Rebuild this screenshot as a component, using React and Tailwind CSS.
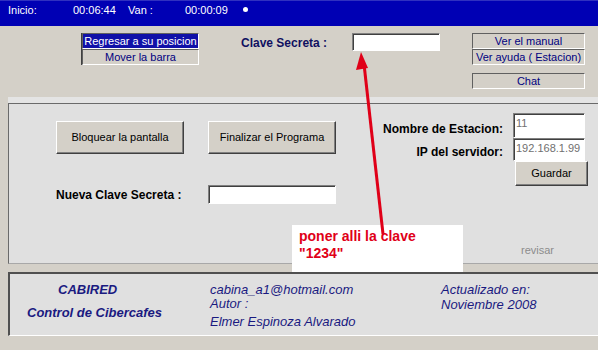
const sunken =
  'border border-t-[#808080] border-l-[#808080] border-b-white border-r-white shadow-[inset_1px_1px_0_#404040]';
const raised =
  'border border-t-white border-l-white border-b-[#404040] border-r-[#404040] shadow-[inset_-1px_-1px_0_#808080] bg-[#d4d0c8]';

function Field({ className = '', value = '', muted = false }) {
  return (
    <div className={`${sunken} bg-white flex items-start px-[2px] pt-[1px] text-[11px] ${muted ? 'bg-[#e4e4e4] text-[#707070]' : 'text-black'} ${className}`}>
      {value}
    </div>
  );
}

function FlatBtn({ children, className = '' }) {
  return (
    <div className={`border border-t-[#606060] border-l-[#606060] border-b-white border-r-white flex items-center justify-center text-[11px] text-[#000080] h-[16px] ${className}`}>
      {children}
    </div>
  );
}

export default function App() {
  return (
    <div className="relative w-[598px] h-[350px] overflow-hidden bg-[#d4d0c8] font-['Liberation_Sans',Arial,sans-serif]">
      {/* barra de tiempo */}
      <div className="h-[26px] bg-[#0000b4] text-white text-[11px] flex items-start pt-[1px] border-t border-t-[#3030c0]">
        <span className="ml-[8px] w-[65px]">Inicio:</span>
        <span className="w-[55px]">00:06:44</span>
        <span className="w-[57px]">Van :</span>
        <span className="w-[58px]">00:00:09</span>
        <span className="w-[5px] h-[5px] mt-[5px] rounded-full bg-white" />
      </div>

      {/* fila superior */}
      <div className="h-[71px] flex items-start pl-[81px] pt-[7px]">
        <div className="w-[118px] flex flex-col border-l border-l-[#404040]">
          <FlatBtn className="bg-[#1010a8] !text-white">Regresar a su posicion</FlatBtn>
          <FlatBtn>Mover la barra</FlatBtn>
        </div>
        <div className="ml-[42px] w-[111px] pt-[1px] text-[12px] font-bold text-[#101060]">Clave Secreta :</div>
        <Field className="w-[88px] h-[18px]" />
        <div className="ml-[32px] w-[113px] flex flex-col">
          <FlatBtn className="h-[16px]">Ver el manual</FlatBtn>
          <FlatBtn className="h-[16px]">Ver ayuda ( Estacion)</FlatBtn>
          <FlatBtn className="mt-[8px] h-[16px]">Chat</FlatBtn>
        </div>
      </div>

      {/* panel principal */}
      <div className="ml-[8px] h-[6px] bg-[#e4e4e4]" />
      <div className="ml-[8px] h-[161px] bg-[#e0e0e0] border-t border-l border-t-[#6a6a6a] border-l-[#6a6a6a] border-b border-b-[#a8a8a8] flex">
        <div className="w-[374px] pl-[47px] pt-[17px]">
          <div className="flex gap-[24px]">
            <div className={`${raised} w-[128px] h-[33px] flex items-center justify-center text-[11px] text-black`}>Bloquear la pantalla</div>
            <div className={`${raised} w-[128px] h-[33px] flex items-center justify-center text-[11px] text-black`}>Finalizar el Programa</div>
          </div>
          <div className="flex items-center mt-[31px]">
            <div className="w-[152px] text-[12px] font-bold text-black">Nueva Clave Secreta :</div>
            <Field className="w-[128px] h-[19px]" />
          </div>
        </div>
        <div className="flex flex-col pt-[9px]">
          <div className="flex">
            <div className="w-[120px] text-right whitespace-nowrap text-[12px] font-bold text-black pt-[7px]">Nombre de Estacion:</div>
            <Field className="ml-[10px] w-[72px] h-[25px]" value="11" muted />
          </div>
          <div className="flex">
            <div className="w-[120px] text-right whitespace-nowrap text-[12px] font-bold text-black pt-[5px]">IP del servidor:</div>
            <Field className="ml-[10px] w-[72px] h-[23px]" value="192.168.1.99" muted />
          </div>
          <div className={`${raised} ml-[132px] w-[73px] h-[25px] flex items-center justify-center text-[11px] text-black`}>Guardar</div>
          <div className="ml-[138px] mt-[56px] text-[11px] text-[#8c8c8c]">revisar</div>
        </div>
      </div>

      {/* pie */}
      <div className="ml-[8px] mt-[8px] h-[64px] bg-[#e0e0e0] border-t-2 border-l-2 border-t-[#505050] border-l-[#505050] border-b border-b-white flex italic text-[#1a1a80]">
        <div className="w-[200px] pt-[8px] font-bold text-[13px] leading-[15px]">
          <div className="ml-[48px]">CABIRED</div>
          <div className="ml-[17px] mt-[8px]">Control de Cibercafes</div>
        </div>
        <div className="w-[231px] pt-[8px] text-[13px] leading-[15px]">
          <div>cabina_a1@hotmail.com</div>
          <div className="-mt-[1px]">Autor :</div>
          <div className="mt-[3px]">Elmer Espinoza Alvarado</div>
        </div>
        <div className="pt-[8px] text-[13px] leading-[15px]">
          <div>Actualizado en:</div>
          <div>Noviembre 2008</div>
        </div>
      </div>

      {/* nota y flecha */}
      <div className="absolute left-[292px] top-[225px] w-[171px] h-[47px] bg-white pl-[7px] pt-[3px] text-[14px] leading-[17px] font-bold text-[#e00018]">
        <div>poner alli la clave</div>
        <div>"1234"</div>
      </div>
      <svg className="absolute left-0 top-0 pointer-events-none" width="598" height="350">
        <line x1="383" y1="234" x2="364" y2="64" stroke="#e00018" strokeWidth="3" />
        <polygon points="361,52 356,70 368,68" fill="#e00018" />
      </svg>
    </div>
  );
}
